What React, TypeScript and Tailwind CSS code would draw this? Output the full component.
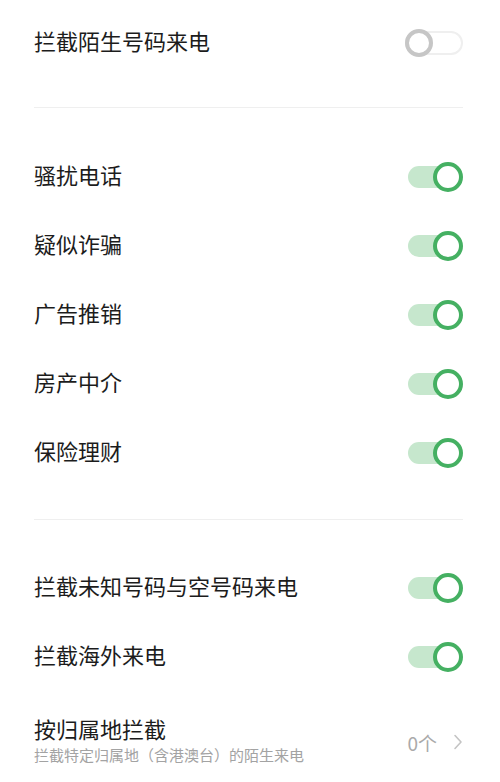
import React from "react";

const FONT = { fontFamily: '"Noto Sans CJK SC", "Noto Sans", sans-serif' };

function Toggle({ on }: { on: boolean }) {
  if (on) {
    return (
      <div className="relative w-[58px] h-[30px] shrink-0">
        <div className="absolute left-[3px] right-[4px] top-[4px] h-[22px] rounded-full bg-[#c6e7cd]" />
        <div className="absolute right-0 top-0 w-[30px] h-[30px] rounded-full bg-white border-[4px] border-[#45b062]" />
      </div>
    );
  }
  return (
    <div className="relative w-[58px] h-[30px] shrink-0">
      <div className="absolute left-0 right-0 top-[3px] h-[24px] rounded-full bg-white border-[2px] border-[#efefef]" />
      <div className="absolute left-0 top-[1px] w-[28px] h-[28px] rounded-full bg-white border-[4px] border-[#c6c6c6]" />
    </div>
  );
}

function Row({ label, on }: { label: string; on: boolean }) {
  return (
    <div className="h-[69px] flex items-center justify-between">
      <span className="text-[22px] text-[#1c1c1c] leading-none pb-[6px]">{label}</span>
      <Toggle on={on} />
    </div>
  );
}

function Divider() {
  return <div className="h-px bg-[#efefef]" />;
}

export default function App() {
  return (
    <div className="w-[500px] h-[782px] bg-white overflow-hidden pl-[34px] pr-[37px]" style={FONT}>
      <div className="pt-[8px]">
        <Row label="拦截陌生号码来电" on={false} />
      </div>
      <div className="pt-[30px] pb-[34px]">
        <Divider />
      </div>
      <Row label="骚扰电话" on />
      <Row label="疑似诈骗" on />
      <Row label="广告推销" on />
      <Row label="房产中介" on />
      <Row label="保险理财" on />
      <div className="pt-[32px] pb-[33px]">
        <Divider />
      </div>
      <Row label="拦截未知号码与空号码来电" on />
      <Row label="拦截海外来电" on />
      <div className="h-[80px] flex items-center justify-between pt-[18px]">
        <div className="flex flex-col">
          <span className="text-[22px] text-[#1c1c1c] leading-[28px]">按归属地拦截</span>
          <span className="text-[15px] text-[#a3a3a3] leading-[22px] mt-[2px]">拦截特定归属地（含港澳台）的陌生来电</span>
        </div>
        <div className="flex items-center gap-[16px] mt-[4px]">
          <span className="text-[19px] text-[#aaaaaa] leading-none">0个</span>
          <svg width="10" height="16" viewBox="0 0 10 16" fill="none">
            <path d="M2 1.5 L8 8 L2 14.5" stroke="#c4c4c4" strokeWidth="1.6" strokeLinecap="round" strokeLinejoin="round" />
          </svg>
        </div>
      </div>
    </div>
  );
}
